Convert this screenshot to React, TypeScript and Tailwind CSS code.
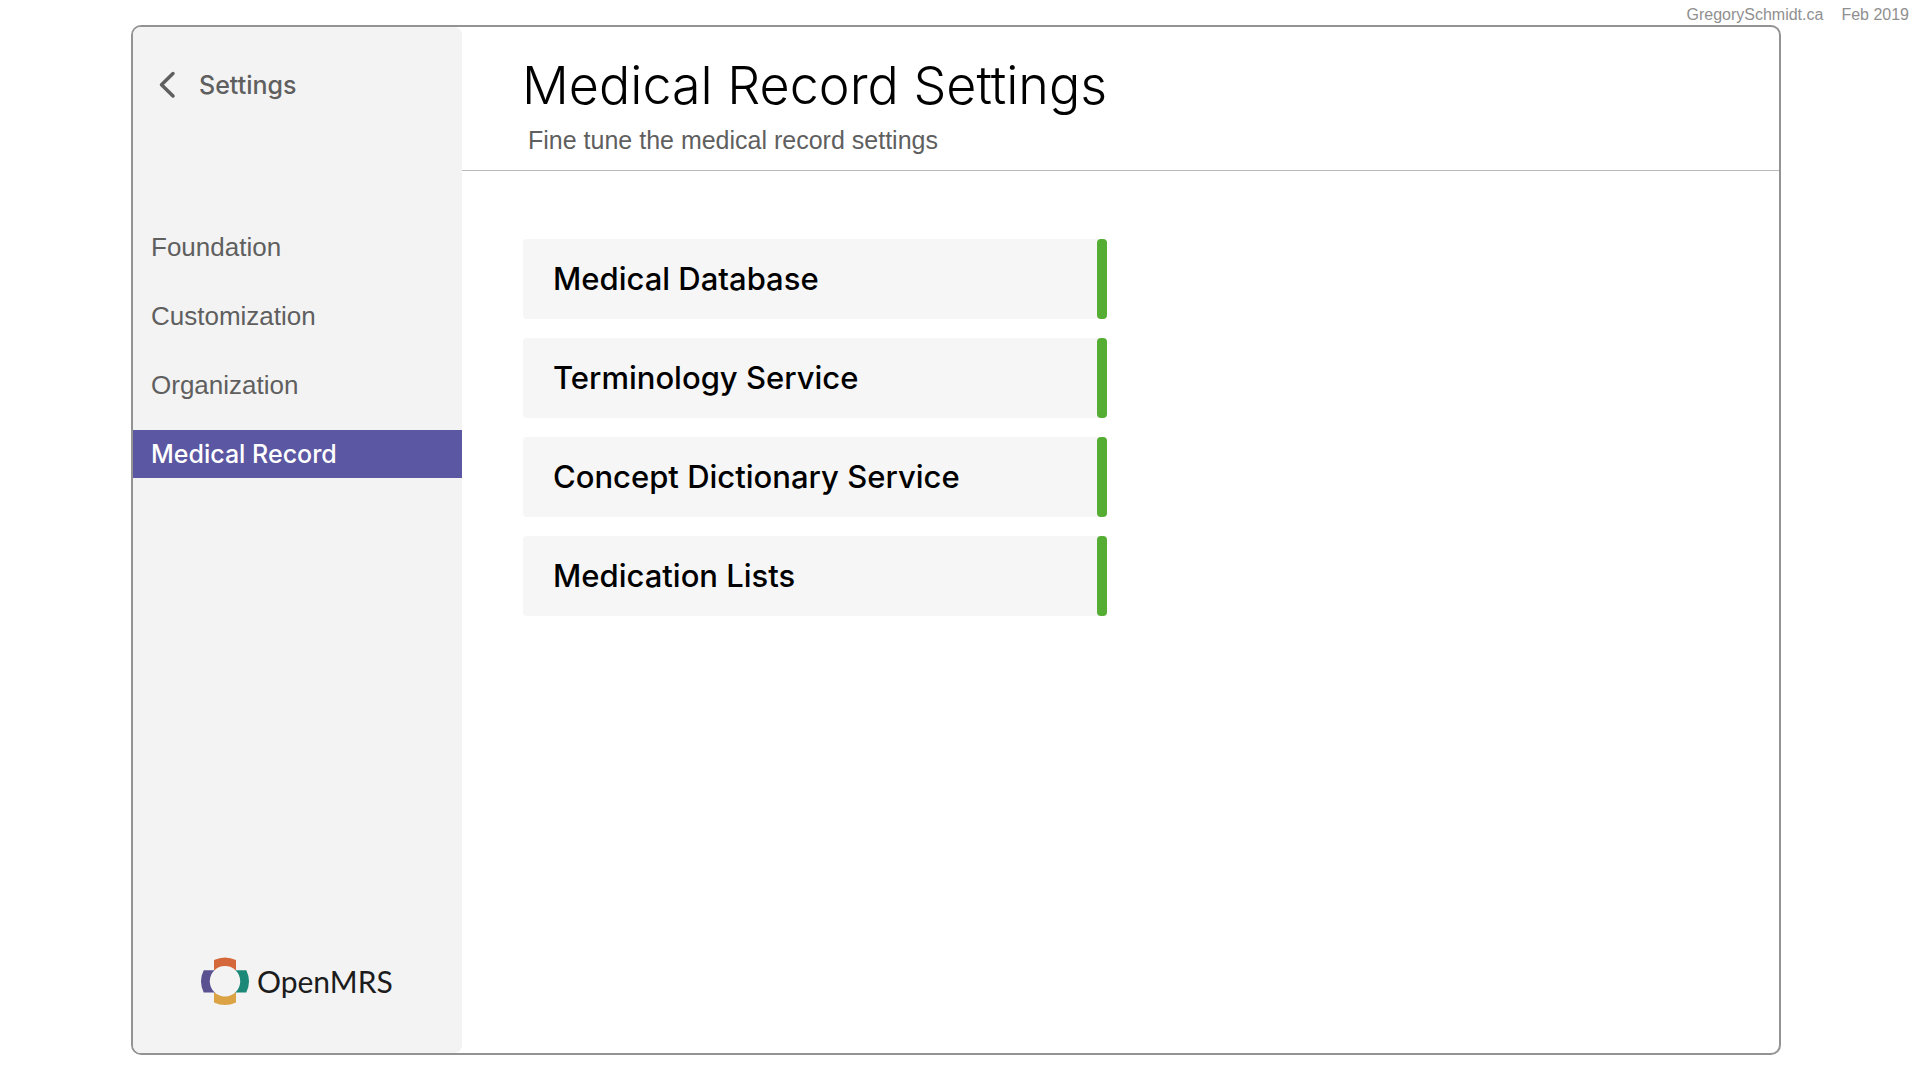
interface NavItem {
  label: string;
  active?: boolean;
}

const navItems: NavItem[] = [
  { label: "Foundation" },
  { label: "Customization" },
  { label: "Organization" },
  { label: "Medical Record", active: true },
];

const services = [
  "Medical Database",
  "Terminology Service",
  "Concept Dictionary Service",
  "Medication Lists",
];

const OpenMrsLogo = () => (
  <div className="flex items-center gap-2">
    <svg className="size-12" viewBox="0 0 48 48" aria-hidden="true">
      <path d="M13 3Q24 -2.200 35 3V24H13Z" fill="#d4683a" />
      <path d="M13 45.400Q24 50.600 35 45.400V24H13Z" fill="#dba344" />
      <path d="M2.700 13.200Q-2.700 24.300 2.700 35.400H24V13.200Z" fill="#5a5191" />
      <path d="M45.300 13.200Q50.700 24.300 45.300 35.400H24V13.200Z" fill="#1c8877" />
      <circle cx="24" cy="24.300" r="15.200" fill="#f3f3f3" />
    </svg>
    <span className="font-['Lato',sans-serif] text-[30px] leading-9 text-[#1c1c1c]">
      OpenMRS
    </span>
  </div>
);

const Sidebar = () => (
  <aside className="flex w-[329px] shrink-0 flex-col rounded-lg bg-[#f3f3f3]">
    <a
      href="#settings"
      className="mt-10 flex items-center gap-[18px] pl-6 font-['Inter',sans-serif] text-[25px] leading-9 font-medium text-[#5f5f5f]"
    >
      <svg
        className="h-7 w-6"
        viewBox="0 0 24 28"
        fill="none"
        stroke="currentColor"
        strokeWidth="3.500"
        strokeLinecap="round"
        strokeLinejoin="round"
        aria-hidden="true"
      >
        <path d="M16 2.500L4.500 13.800L16 25" />
      </svg>
      Settings
    </a>

    <nav className="mt-[120px] flex flex-col gap-[21px]">
      {navItems.map((item) => (
        <a
          key={item.label}
          href={`#${item.label}`}
          className={
            item.active
              ? "bg-[#5b57a2] px-[18px] font-['Inter',sans-serif] text-[25px] leading-[48px] font-medium text-white"
              : "px-[18px] font-['Liberation_Sans',Arial,sans-serif] text-[26px] leading-[48px] text-[#5f5f5f]"
          }
        >
          {item.label}
        </a>
      ))}
    </nav>

    <div className="mt-auto mb-12 ml-17">
      <OpenMrsLogo />
    </div>
  </aside>
);

const App = () => {
  return (
    <div className="flex min-h-screen flex-col bg-white pb-[25px] font-['Liberation_Sans',Arial,sans-serif]">
      <div className="flex h-[25px] items-center justify-end gap-[18px] pt-1 pr-[11px] text-base text-[#8f8f8f]">
        <a href="#author">GregorySchmidt.ca</a>
        <span>Feb 2019</span>
      </div>

      <div className="mr-[139px] ml-[131px] flex grow rounded-[10px] border-2 border-[#939393]">
        <Sidebar />

        <main className="grow">
          <header className="border-b border-[#b9b9b9] pt-[27px] pb-3 pl-[60px]">
            <h1 className="font-['Inter',sans-serif] text-[52px] leading-16 font-light text-black">
              Medical Record Settings
            </h1>
            <p className="pt-1 pl-[6px] text-[25px] leading-9 text-[#5f5f5f]">
              Fine tune the medical record settings
            </p>
          </header>

          <div className="mt-17 ml-[61px] flex max-w-[584px] flex-col gap-[19px]">
            {services.map((name) => (
              <button
                key={name}
                type="button"
                className="flex h-20 justify-between rounded-sm bg-[#f6f6f6] text-left font-['Inter',sans-serif] text-[31px] font-medium text-black"
              >
                <span className="self-center pl-[30px]">{name}</span>
                <span className="w-[10px] self-stretch rounded-sm bg-[#56ad34]" />
              </button>
            ))}
          </div>
        </main>
      </div>
    </div>
  );
};

export default App;
